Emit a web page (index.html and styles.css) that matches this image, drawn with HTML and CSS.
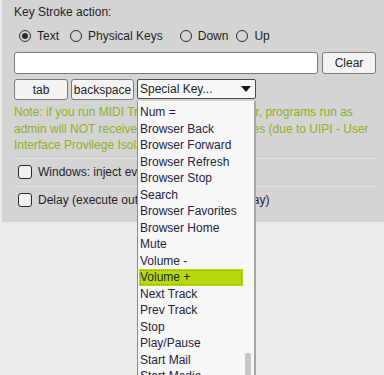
FILE: index.html
```html
<!DOCTYPE html>
<html lang="en">
<head>
<meta charset="UTF-8" />
<title>Key Stroke action</title>
<link rel="stylesheet" href="styles.css">
</head>
<body>
  <div class="panel">
    <div class="title">Key Stroke action:</div>
    <div class="radios">
      <span class="radio checked"><span class="circle"></span>Text</span>
      <span class="radio r-phys"><span class="circle"></span>Physical Keys</span>
      <span class="radio r-down"><span class="circle"></span>Down</span>
      <span class="radio"><span class="circle"></span>Up</span>
    </div>
    <div class="input-row">
      <div class="textbox"></div>
      <button class="btn clear">Clear</button>
    </div>
    <div class="key-row">
      <button class="btn key-tab">tab</button>
      <button class="btn key-bs">backspace</button>
      <div class="select">Special Key...<span class="arrow"></span></div>
    </div>
    <p class="note">Note: if you run MIDI Translator as admin user, programs run as<br>admin will NOT receive all keystroke messages (due to UIPI - User<br>Interface Provilege Isolation).</p>
    <div class="opt"><span class="box"></span>Windows: inject events</div>
    <div class="opt"><span class="box"></span>Delay (execute outgoing actions with delay)</div>
  </div>

  <div class="list">
    <ul>
      <li>Num =</li>
      <li>Browser Back</li>
      <li>Browser Forward</li>
      <li>Browser Refresh</li>
      <li>Browser Stop</li>
      <li>Search</li>
      <li>Browser Favorites</li>
      <li>Browser Home</li>
      <li>Mute</li>
      <li>Volume -</li>
      <li class="active">Volume +</li>
      <li>Next Track</li>
      <li>Prev Track</li>
      <li>Stop</li>
      <li>Play/Pause</li>
      <li>Start Mail</li>
      <li>Start Media</li>
    </ul>
    <div class="thumb"></div>
  </div>
</body>
</html>
```
FILE: styles.css
```css
* {
  box-sizing: border-box;
}
html, body {
  margin: 0;
  padding: 0;
  background: #ebebeb;
  font-family: "Liberation Sans", Arial, sans-serif;
  font-size: 12px;
  color: #1e1e28;
}
.panel {
  margin-left: 2px;
  background: #d4d4d4;
  padding: 4px 8px 8px 12px;
  height: 222px;
}
.title {
  line-height: 16px;
}
/* radio group */
.radios {
  display: flex;
  align-items: center;
  margin-top: 8px;
  padding-left: 5px;
  height: 16px;
}
.radio {
  display: flex;
  align-items: center;
  gap: 6px;
  margin-right: 11px;
}
.radio.r-phys {
  margin-right: 17px;
}
.radio.r-down {
  margin-right: 8px;
}
.circle {
  width: 12px;
  height: 12px;
  border: 1.5px solid #2a2a2a;
  border-radius: 50%;
  display: flex;
  align-items: center;
  justify-content: center;
}
.radio.checked .circle::after {
  content: "";
  width: 6px;
  height: 6px;
  border-radius: 50%;
  background: #2a2a2a;
}
/* text input and buttons */
.input-row {
  display: flex;
  gap: 4px;
  margin-top: 8px;
  height: 22px;
}
.textbox {
  flex: 1;
  background: #fff;
  border: 1px solid #7a7a7a;
  border-radius: 3px;
}
.btn {
  font: inherit;
  color: #1e1e28;
  background: #f3f3f3;
  border: 1px solid #7a7a7a;
  border-radius: 3px;
  padding: 0;
}
.clear {
  width: 54px;
}
.key-row {
  display: flex;
  gap: 3px;
  margin-top: 5px;
  height: 21px;
}
.key-tab {
  width: 54px;
}
.key-bs {
  width: 63px;
}
.select {
  position: relative;
  width: 119px;
  height: 20px;
  background: #f8f8f8;
  border: 1px solid #4a4a4a;
  border-radius: 2px;
  padding-left: 2px;
  line-height: 18px;
}
.arrow {
  position: absolute;
  right: 4px;
  top: 6px;
  border-left: 5px solid transparent;
  border-right: 5px solid transparent;
  border-top: 6px solid #111;
}
.note {
  margin: 4px 0 4px;
  color: #8fae24;
  line-height: 16.5px;
}
.opt {
  display: flex;
  align-items: center;
  gap: 6px;
  height: 28px;
  border-top: 1px solid #e4e4e4;
  padding-left: 4px;
}
.box {
  width: 14px;
  height: 14px;
  border: 1.5px solid #2a2a2a;
  border-radius: 3px;
  background: #f0f0f0;
}
/* open dropdown */
.list {
  position: absolute;
  left: 137px;
  top: 101px;
  width: 119px;
  height: 280px;
  overflow: hidden;
  background: #f7f7f7;
  border-left: 1px solid #8c8c8c;
  border-right: 2px solid #a6a6a6;
}
.list ul {
  list-style: none;
  margin: 0;
  padding: 3px 0 0 1px;
  width: 105px;
}
.list li {
  height: 16.5px;
  line-height: 16.5px;
  padding-left: 1px;
  white-space: nowrap;
  color: #1f2240;
}
.list li.active {
  background: #b9d90c;
  outline: 1px dotted #8aa20a;
  outline-offset: -2px;
}
.thumb {
  position: absolute;
  left: 107px;
  top: 252px;
  width: 6px;
  height: 40px;
  background: #c6c6c6;
  border-radius: 2px 2px 0 0;
}
```
